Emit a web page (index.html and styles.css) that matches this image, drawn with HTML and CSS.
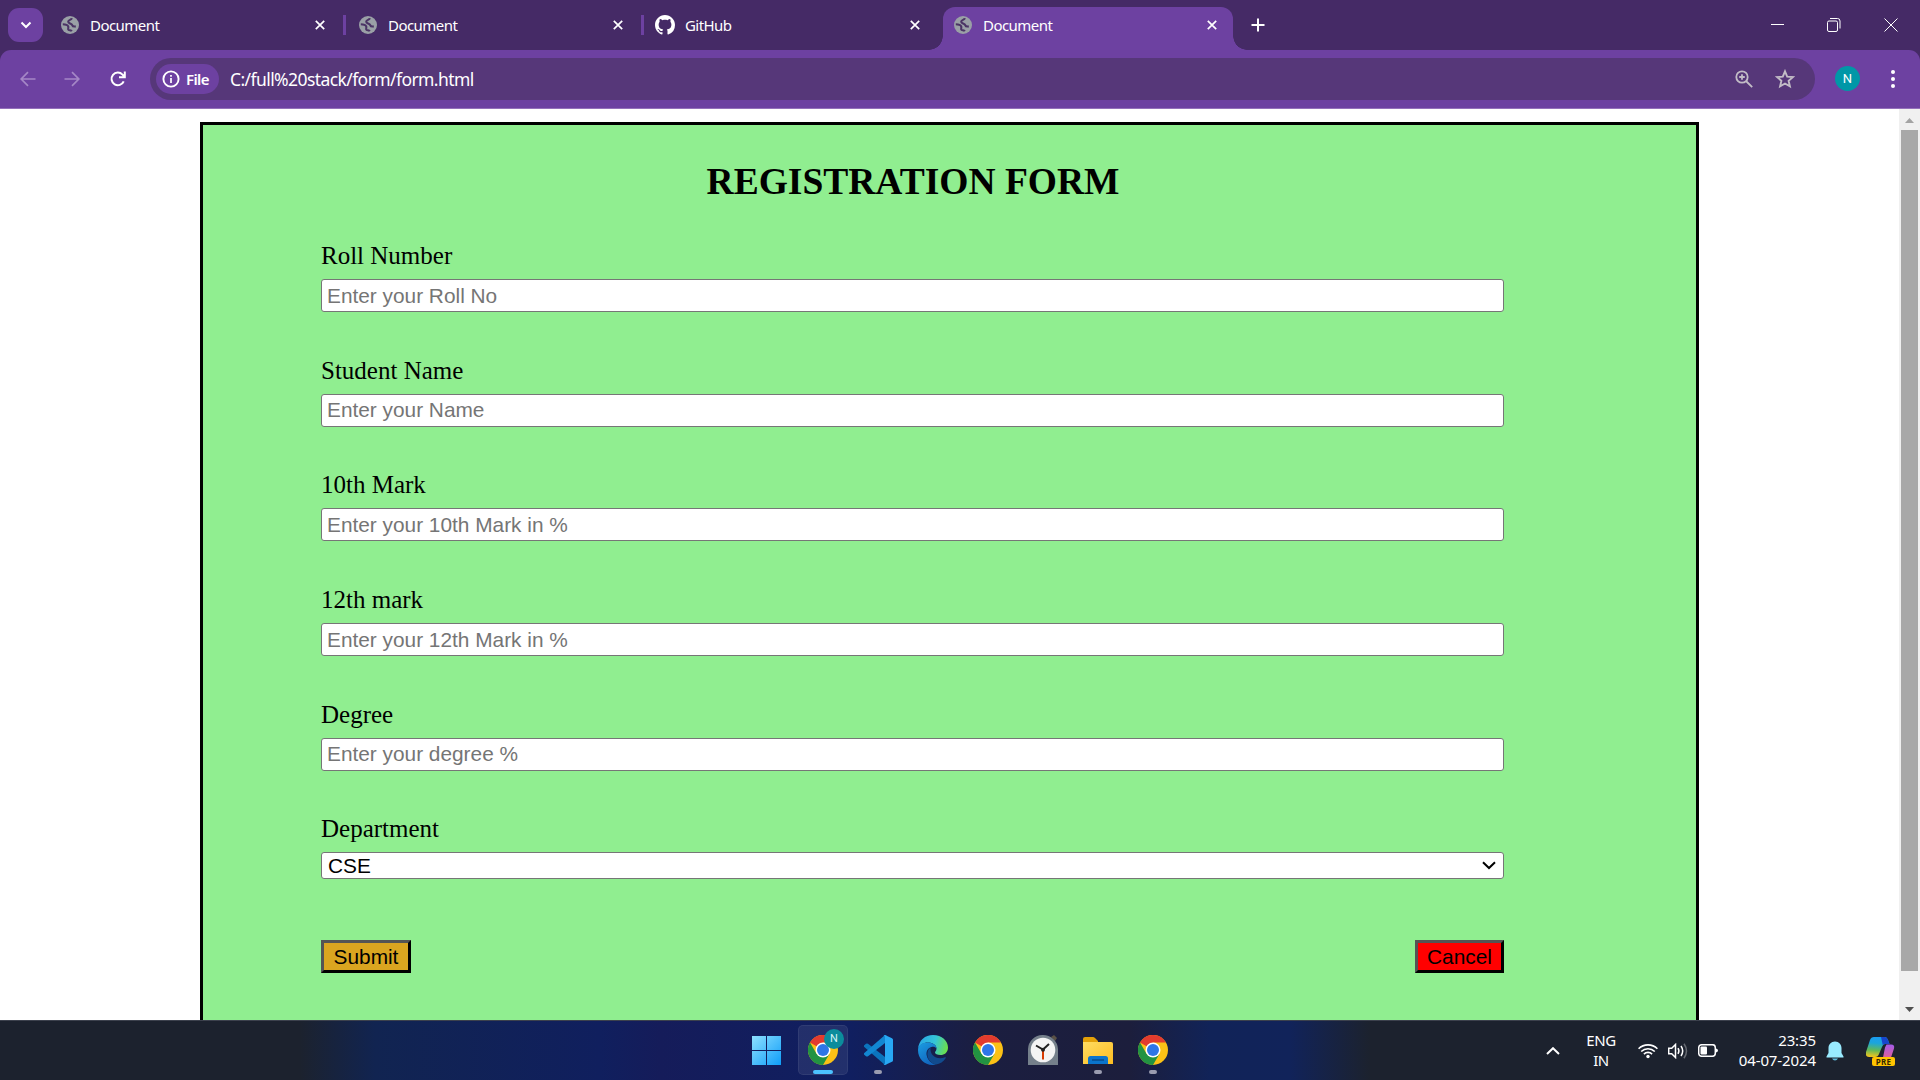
FILE: index.html
```html
<!DOCTYPE html>
<html lang="en">
<head>
<meta charset="utf-8">
<title>Document</title>
<link rel="stylesheet" href="styles.css">
</head>
<body>
<svg width="0" height="0" class="defs">
  <defs>
    <symbol id="globe" viewBox="0 0 18 18"><circle cx="9" cy="9" r="9" fill="#9aa0a6"/><path class="land" d="M10.800 2.200C10.500 4.200 7.200 3.600 7.200 5.800c0 1.900 3.400 1.300 4 3.300.4 1.300 1.600 1.700 3.600 1.300M1.800 8.200c2 0 4.700.5 5.400 2.200.6 1.500-.7 2.300.3 3.300.9.8 2.500.2 3.300 1.500" fill="none" stroke-width="2.100"/></symbol>
    <symbol id="x" viewBox="0 0 10 10"><path d="M.8.8l8.400 8.400M9.200.8L.8 9.200" stroke="#fff" stroke-width="1.700"/></symbol>
    <symbol id="chrome" viewBox="0 0 30 30">
      <circle cx="15" cy="15" r="15" fill="#fbc116"/>
      <path d="M15 15L2 7.500A15 15 0 0 1 28 7.500H15z" fill="#e33b2e"/>
      <path d="M2 7.500A15 15 0 0 0 15 30L21.500 18.700 8.500 18.700z" fill="#229342"/>
      <circle cx="15" cy="15" r="7.500" fill="#fff"/><circle cx="15" cy="15" r="6" fill="#2f76e8"/>
    </symbol>
  </defs>
</svg>
<div class="screen">
  <header class="tabs">
    <span class="search"><svg width="12" height="8" viewBox="0 0 12 8"><path d="M1.500 1.500L6 6l4.500-4.500" fill="none" stroke="#fff" stroke-width="2"/></svg></span>
    <div class="tab t1"><svg class="fav"><use href="#globe"/></svg><span>Document</span><svg class="close"><use href="#x"/></svg></div>
    <div class="tab"><svg class="fav"><use href="#globe"/></svg><span>Document</span><svg class="close"><use href="#x"/></svg></div>
    <div class="tab t3"><svg class="git" viewBox="0 0 16 16"><path fill="#fff" d="M8 0C3.580 0 0 3.580 0 8c0 3.540 2.290 6.530 5.470 7.590.4.070.55-.17.55-.38 0-.19-.01-.82-.01-1.490-2.010.37-2.530-.49-2.690-.94-.09-.23-.48-.94-.82-1.130-.28-.15-.68-.52-.01-.53.63-.01 1.080.58 1.230.82.72 1.210 1.870.87 2.330.66.07-.52.28-.87.51-1.070-1.780-.2-3.640-.89-3.640-3.950 0-.87.31-1.590.82-2.150-.08-.2-.36-1.020.08-2.120 0 0 .67-.21 2.200.82.640-.18 1.320-.27 2-.27s1.360.09 2 .27c1.530-1.040 2.200-.82 2.200-.82.440 1.100.16 1.920.08 2.120.51.56.82 1.270.82 2.150 0 3.070-1.870 3.750-3.650 3.950.29.25.54.73.54 1.480 0 1.070-.01 1.930-.01 2.200 0 .21.15.46.55.38A8.010 8.010 0 0 0 16 8c0-4.420-3.580-8-8-8z"/></svg><span>GitHub</span><svg class="close"><use href="#x"/></svg></div>
    <div class="tab active"><svg class="fav"><use href="#globe"/></svg><span>Document</span><svg class="close"><use href="#x"/></svg></div>
    <svg class="plus" viewBox="0 0 14 14"><path d="M7 .5v13M.5 7h13" stroke="#fff" stroke-width="2"/></svg>
    <div class="winctl">
      <svg width="14" height="14" viewBox="0 0 14 14"><path d="M1 6.500h13" stroke="#fff"/></svg>
      <svg width="14" height="14" viewBox="0 0 14 14" fill="none"><rect x=".5" y="3" width="10" height="10.500" rx="1.500" stroke="#fff"/><path d="M3 .5h7.500a2.500 2.500 0 0 1 2.500 2.500v7.500" stroke="#fff"/></svg>
      <svg width="14" height="14" viewBox="0 0 14 14"><path d="M.5.5l13 13M13.500.5l-13 13" stroke="#fff"/></svg>
    </div>
  </header>
  <nav class="toolbar-wrap"><div class="toolbar">
    <svg class="arrow" viewBox="0 0 16 16"><path d="M15.500 8H1.500M8 1.200L1.200 8 8 14.800" fill="none" stroke="#a587c6" stroke-width="1.700"/></svg>
    <svg class="arrow fwd" viewBox="0 0 16 16"><path d="M.5 8h14M8 1.200L14.800 8 8 14.800" fill="none" stroke="#a587c6" stroke-width="1.700"/></svg>
    <svg class="reload" viewBox="0 0 16 16"><path d="M13.700 10.300A6.300 6.300 0 1 1 12.500 3.600L14.500 5.800M14.800.5v5.800H9" fill="none" stroke="#fff" stroke-width="2"/></svg>
    <div class="omni">
      <span class="chip"><svg width="18" height="18" viewBox="0 0 18 18"><circle cx="9" cy="9" r="7.600" fill="none" stroke="#fff" stroke-width="1.900"/><path d="M9 8v5M9 5v1.800" stroke="#fff" stroke-width="1.700"/></svg><b>File</b></span>
      <span class="url">C:/full%20stack/form/form.html</span>
      <svg class="mag" width="18" height="18" viewBox="0 0 18 18" fill="none" stroke="#c2bcc6" stroke-width="1.800"><circle cx="7" cy="7" r="5.700"/><path d="M11 11l6.200 6.200M4.200 7h5.600M7 4.200v5.600"/></svg>
      <svg class="star" width="20" height="20" viewBox="0 0 20 20"><path d="M10 2.300l2.200 5.300 5.700.5-4.300 3.700 1.300 5.600L10 14.500l-4.900 2.900 1.300-5.600-4.300-3.700 5.700-.5z" fill="none" stroke="#c2bcc6" stroke-width="1.900"/></svg>
    </div>
    <span class="avatar">N</span>
    <svg class="dots" width="4" height="18" viewBox="0 0 4 18" fill="#fff"><circle cx="2" cy="2" r="2"/><circle cx="2" cy="9" r="2"/><circle cx="2" cy="16" r="2"/></svg>
  </div></nav>
  <main class="page">
    <form class="form">
      <h2>REGISTRATION FORM</h2>
      <div class="field"><label>Roll Number</label><input type="text" placeholder="Enter your Roll No"></div>
      <div class="field"><label>Student Name</label><input type="text" placeholder="Enter your Name"></div>
      <div class="field"><label>10th Mark</label><input type="text" placeholder="Enter your 10th Mark in %"></div>
      <div class="field"><label>12th mark</label><input type="text" placeholder="Enter your 12th Mark in %"></div>
      <div class="field"><label>Degree</label><input type="text" placeholder="Enter your degree %"></div>
      <div class="field"><label>Department</label><div class="select"><span>CSE</span><svg width="14" height="9" viewBox="0 0 14 9"><path d="M1 1.200l6 5.800 6-5.800" fill="none" stroke="#000" stroke-width="2"/></svg></div></div>
      <div class="buttons"><button type="button" class="submit">Submit</button><button type="button" class="cancel">Cancel</button></div>
    </form>
    <aside class="scroll">
      <svg width="9" height="5" viewBox="0 0 9 5"><path d="M4.500 0L9 5H0z" fill="#a3a3a3"/></svg>
      <div class="thumb"></div>
      <svg width="9" height="5" viewBox="0 0 9 5"><path d="M4.500 5L9 0H0z" fill="#505050"/></svg>
    </aside>
  </main>
  <footer class="taskbar">
    <div class="apps">
      <div class="app"><svg viewBox="0 0 30 30"><defs><linearGradient id="w" x2="1" y2="1" gradientUnits="userSpaceOnUse" x1="0" y1="0" gradientTransform="scale(30)"><stop stop-color="#8ee0ff"/><stop offset="1" stop-color="#0a9bf8"/></linearGradient></defs><path fill="url(#w)" d="M-1 1h14v14H-1zM14 1h14v14H14zM-1 16h14v14H-1zM14 16h14v14H14z"/></svg></div>
      <div class="app current"><svg><use href="#chrome"/></svg><span class="badge">N</span><i></i></div>
      <div class="app"><svg viewBox="0 0 30 30"><path d="M1 10.500l2-1.800q1-.6 2 0L24 23.500V29L22 30 1 11.800z" fill="#0b74bd"/><path d="M1 19.500l2 1.800q1 .6 2 0L24 6.500V1L22 0 1 18.200z" fill="#1287d2"/><path d="M22 0l7 3.200q1 .5 1 1.600v20.400q0 1.100-1 1.600L22 30q-1 0-1.500-.8 1.500.3 1.500-1.200V2q0-1.500-1.500-1.200Q21 0 22 0z" fill="#28a8f4"/></svg><i></i></div>
      <div class="app"><svg viewBox="0 0 30 30"><defs><linearGradient id="e1" x1="0" y1=".3" x2="1" y2=".5"><stop stop-color="#28a6e6"/><stop offset=".55" stop-color="#35c5d8"/><stop offset="1" stop-color="#6be04b"/></linearGradient><linearGradient id="e2" x1="0" y1="0" x2=".6" y2="1"><stop stop-color="#1b9de2"/><stop offset="1" stop-color="#1164bd"/></linearGradient></defs><path d="M0 14C1 5 7 0 15 0c9 0 15 6 15 12.500 0 5-3.600 7.500-7.500 7.500-3.300 0-5.500-1.200-5.500-2.500 0-1 1.500-1.500 1.500-4C18.500 10 14.500 7.500 10 7.500 5 7.500 1.500 10 0 14z" fill="url(#e1)"/><path d="M0 15C0 10.500 4 7.500 9.500 7.500c5 0 9 2.500 9 6-1-1.500-3-2-5-1.500-4 1-6 5-4.500 9.500 1.200 4 4.500 7 9 8.100C8 31.500 0 25 0 15z" fill="url(#e2)"/><path d="M12.500 12.500C7 16 8.500 27.500 18 29.600c4-.6 7.500-3 9.800-6.600.3-.7-.2-1-.8-.7-8 3.300-15.500-2-14.500-9.800z" fill="#114b8e"/></svg></div>
      <div class="app"><svg><use href="#chrome"/></svg></div>
      <div class="app"><svg viewBox="0 0 30 30"><path d="M23 2l3-2 3 3-2 3z" fill="#5a5145"/><path d="M0 30V14A14.500 14.500 0 0 1 15 0a15 15 0 0 1 15 14v16z" fill="#75808b"/><circle cx="15" cy="15" r="12.300" fill="#f4f4f4"/><path d="M8 10.500l7 4 6-5.500" fill="none" stroke="#222" stroke-width="2"/><path d="M15 16v8.500" stroke="#d83b01" stroke-width="2"/><circle cx="15" cy="14.700" r="2" fill="#222"/></svg></div>
      <div class="app"><svg viewBox="0 0 30 30"><defs><linearGradient id="f" x2="1" y2="1"><stop stop-color="#ffdc62"/><stop offset="1" stop-color="#fdbd21"/></linearGradient></defs><path d="M0 10V4q0-2 2-2h8q1 0 2 1l3 3v4z" fill="#e3a008"/><path d="M0 7h28q2 0 2 2v20H0z" fill="url(#f)"/><path d="M5 29v-5.500Q5 21 7.500 21h15Q25 21 25 23.500V29z" fill="#0b74cc"/><path d="M9 25h12" stroke="#06417c" stroke-width="1.200"/></svg><i></i></div>
      <div class="app"><svg><use href="#chrome"/></svg><i></i></div>
    </div>
    <div class="tray">
      <svg class="up" width="14" height="8" viewBox="0 0 14 8"><path d="M1 7l6-5.800L13 7" fill="none" stroke="#fff" stroke-width="2"/></svg>
      <div class="lang">ENG<br>IN</div>
      <svg class="wifi" width="20" height="16" viewBox="0 0 20 16" fill="none" stroke="#fff" stroke-width="1.600"><path d="M.6 5.800a13.300 13.300 0 0 1 18.800 0M3.200 8.500a9.600 9.600 0 0 1 13.600 0M5.900 11.100a5.800 5.800 0 0 1 8.200 0"/><circle cx="10" cy="13.500" r="1.700" fill="#fff" stroke="none"/></svg>
      <svg class="vol" width="21" height="16" viewBox="0 0 21 16" fill="none" stroke="#fff" stroke-width="1.500"><path d="M.7 5.200h3L7.500 1.500v13L3.700 10.800h-3z"/><path d="M10 5.200q1.800 2.800 0 5.600M13 3q3.400 5 0 10"/><path d="M16 .8q5 7.200 0 14.400" stroke="#656971"/></svg>
      <svg class="bat" width="20" height="13" viewBox="0 0 20 13"><rect x=".7" y=".7" width="16.600" height="11.600" rx="3" fill="none" stroke="#fff" stroke-width="1.500"/><rect x="2.500" y="2.600" width="6.500" height="7.800" rx="1" fill="#fff"/><path d="M18 4.500q2 .5 2 2t-2 2z" fill="#fff"/></svg>
      <div class="clock">23:35<br>04-07-2024</div>
      <svg class="bell" width="18" height="20" viewBox="0 0 18 20"><path d="M9 .5C5 .5 2.500 3.500 2.500 7v5L.5 15.500v1h17v-1L15.500 12V7C15.500 3.500 13 .5 9 .5z" fill="#99ebff"/><path d="M6 17.500h6q-1 2-3 2t-3-2z" fill="#5fb8d8"/></svg>
      <div class="copilot"><svg width="30" height="28" viewBox="0 0 30 28"><defs><linearGradient id="c1" x1=".4" y1="0" x2=".3" y2="1"><stop stop-color="#1a9df0"/><stop offset=".3" stop-color="#1ba5dc"/><stop offset=".65" stop-color="#5fb85a"/><stop offset="1" stop-color="#f4c51c"/></linearGradient><linearGradient id="c2" x2="0" y2="1"><stop stop-color="#a35bea"/><stop offset="1" stop-color="#f2607b"/></linearGradient></defs><path d="M8 0h11q2 0 3 3l1.500 4H19q-2 0-3 3l-3 7q-1 3-4 3H3q-4 0-3-5L4 3Q5 0 8 0z" fill="url(#c1)"/><path d="M15 0h4q2 0 3 3l1.500 4H19q-1.500 0-2.200 1.200z" fill="#1746cc"/><path d="M20.500 7.500H25q4 0 3 4l-3 9q-1 3-4 5h-8q3-1 4-5l2-10z" fill="url(#c2)"/></svg><b>PRE</b></div>
    </div>
  </footer>
</div>
</body>
</html>
```
FILE: styles.css
```css
* { box-sizing: border-box; }
body { margin: 0; background: #fff; overflow: hidden; }
svg { display: block; flex: none; }
.defs { position: absolute; }
.screen { width: 1920px; height: 1080px; display: grid; grid-template-rows: 50px 59px 911px 60px; overflow: hidden; }

/* Tab strip */
.tabs { display: flex; background: #452a66; color: #fff; font: 15px "Noto Sans", sans-serif; letter-spacing: -.55px; }
.search { width: 35px; height: 34px; margin: 8px 0 0 8px; border-radius: 11px; background: #6d41a1; display: flex; align-items: center; justify-content: center; }
.tab { position: relative; flex: none; width: 298px; height: 50px; display: flex; align-items: center; padding: 0 20px 0 14px; }
.tab.t1 { width: 302px; padding-left: 18px; }
.tab::after { content: ""; position: absolute; right: -1px; top: 15px; width: 3px; height: 20px; background: #6d41a1; }
.tab.t3::after { display: none; }
.tab.t3 { padding: 0 23px 0 12px; width: 300px; }
.tab span { flex: 1; }
.fav { width: 18px; height: 18px; margin-right: 11px; }
.land { stroke: #4b3465; }
.git { width: 20px; height: 20px; margin-right: 10px; }
.close { width: 10px; height: 10px; }
.tab.active { width: 290px; height: 43px; margin-top: 7px; padding: 0 16px 7px 11px; background: #6d41a1; border-radius: 12px 12px 0 0; }
.tab.active::after, .tab.active::before { content: ""; position: absolute; top: auto; bottom: 0; width: 14px; height: 14px; }
.tab.active::before { left: -14px; background: radial-gradient(circle at 0 0, #452a66 13.500px, #6d41a1 14px); }
.tab.active::after { right: -14px; background: radial-gradient(circle at 100% 0, #452a66 13.500px, #6d41a1 14px); }
.plus { width: 14px; height: 14px; margin: 18px 0 0 18px; }
.winctl { margin: 18px 22px 0 auto; display: flex; gap: 43px; }

/* Toolbar */
.toolbar-wrap { background: #452a66; }
.toolbar { height: 59px; background: #6d41a1; border-radius: 11px 11px 0 0; border-bottom: 1px solid #9470ba; display: flex; align-items: center; padding: 0 25px 1px 20px; }
.arrow { width: 16px; height: 16px; }
.fwd { margin-left: 28px; }
.reload { width: 16px; height: 16px; margin-left: 30px; }
.omni { flex: 1; height: 42px; margin: 0 20px 0 24px; border-radius: 21px; background: #563779; display: flex; align-items: center; padding: 0 20px 0 6px; }
.chip { width: 63px; height: 30px; border-radius: 15px; background: #6d41a1; display: flex; align-items: center; gap: 6px; padding-left: 6px; color: #fff; font: 15px "Noto Sans", sans-serif; }
.chip b { font-weight: 600; letter-spacing: -.6px; }
.url { color: #fff; font: 17.500px "Noto Sans", sans-serif; margin-left: 11px; flex: 1; letter-spacing: -.58px; }
.mag { margin-right: 22px; }
.avatar { width: 25px; height: 25px; border-radius: 50%; background: #0097a7; color: #fff; font: 13px/25px Roboto, sans-serif; text-align: center; margin-right: 31px; }

/* Document viewport */
.page { display: flex; overflow: hidden; background: #fff; }
.form { flex: none; width: 1499px; height: 938px; margin: 13px 0 0 200px; border: 3px solid #000; background: #90ee90; padding: 35px 192px 0 118px; font: 25px/30.500px "Liberation Serif", serif; color: #000; }
h2 { margin: 0 0 38px; padding-left: 1px; font-size: 37.500px; line-height: 43px; text-align: center; }
.field { height: 114.700px; }
.field label { display: block; height: 38px; }
.field input, .select { display: flex; width: 100%; height: 33px; border: 1px solid #767676; border-radius: 3px; background: #fff; padding: 0 5px; font: 20.830px "Liberation Sans", sans-serif; }
.field input::placeholder { color: #757575; }
.field .select { height: 27px; align-items: center; justify-content: space-between; padding: 0 7px 0 6px; }
.buttons { display: flex; justify-content: space-between; margin-top: 11.300px; }
.buttons button { height: 33px; padding: 0; border: 3px outset #000; font: 20.830px "Liberation Sans", sans-serif; color: #000; }
.submit { width: 90px; background: #daa520; }
.cancel { width: 89px; background: #f00; }
.scroll { width: 21px; margin-left: auto; background: #f0f0f0; display: flex; flex-direction: column; align-items: center; padding: 9px 0 8px; }
.thumb { width: 17px; height: 841px; margin: 7px 0 36px; background: #a8a8a8; }

/* Taskbar */
.taskbar { border-top: 1px solid #3c414d; background: linear-gradient(90deg, #1c222e 0, #1c222e 300px, #112451 375px, #101f5e 600px, #151c5a 660px, #101f60 850px, #1b1e40 980px, #1c1e3c 1130px, #112358 1210px, #11235a 1290px, #1c222e 1370px); display: flex; justify-content: space-between; }
.apps { display: flex; gap: 5px; margin: 4px 0 0 743px; }
.app { position: relative; width: 50px; height: 50px; padding: 10px; }
.app > svg { width: 30px; height: 30px; overflow: visible; }
.current { background: #ffffff14; border-radius: 5px; box-shadow: inset 0 0 0 1px #ffffff10; }
.app i { position: absolute; left: 21px; bottom: 1px; width: 8px; height: 4px; border-radius: 2px; background: #9a9cb0; }
.app.current i { left: 15px; width: 20px; background: #4cc2ff; }
.badge { position: absolute; left: 26px; top: 4px; width: 20px; height: 20px; border-radius: 50%; background: #0b8c9c; color: #d5f3f5; font: 11px/20px Roboto, sans-serif; text-align: center; }
.tray { display: flex; align-items: center; padding-right: 24px; color: #fff; font: 15px/20px "Noto Sans", sans-serif; letter-spacing: -.4px; }
.lang { width: 32px; text-align: center; margin: 0 21px 2px 25px; }
.vol { margin: 0 9px 0 10px; }
.clock { width: 98px; text-align: right; margin: 0 10px 2px 0; white-space: nowrap; letter-spacing: -.1px; }
.copilot { position: relative; margin-left: 22px; }
.copilot b { position: absolute; left: 6px; top: 20px; width: 23px; height: 9px; border-radius: 2px; background: #ffc400; color: #332600; font: bold 8px/9px "Noto Sans", sans-serif; text-align: center; letter-spacing: .3px; }
```
